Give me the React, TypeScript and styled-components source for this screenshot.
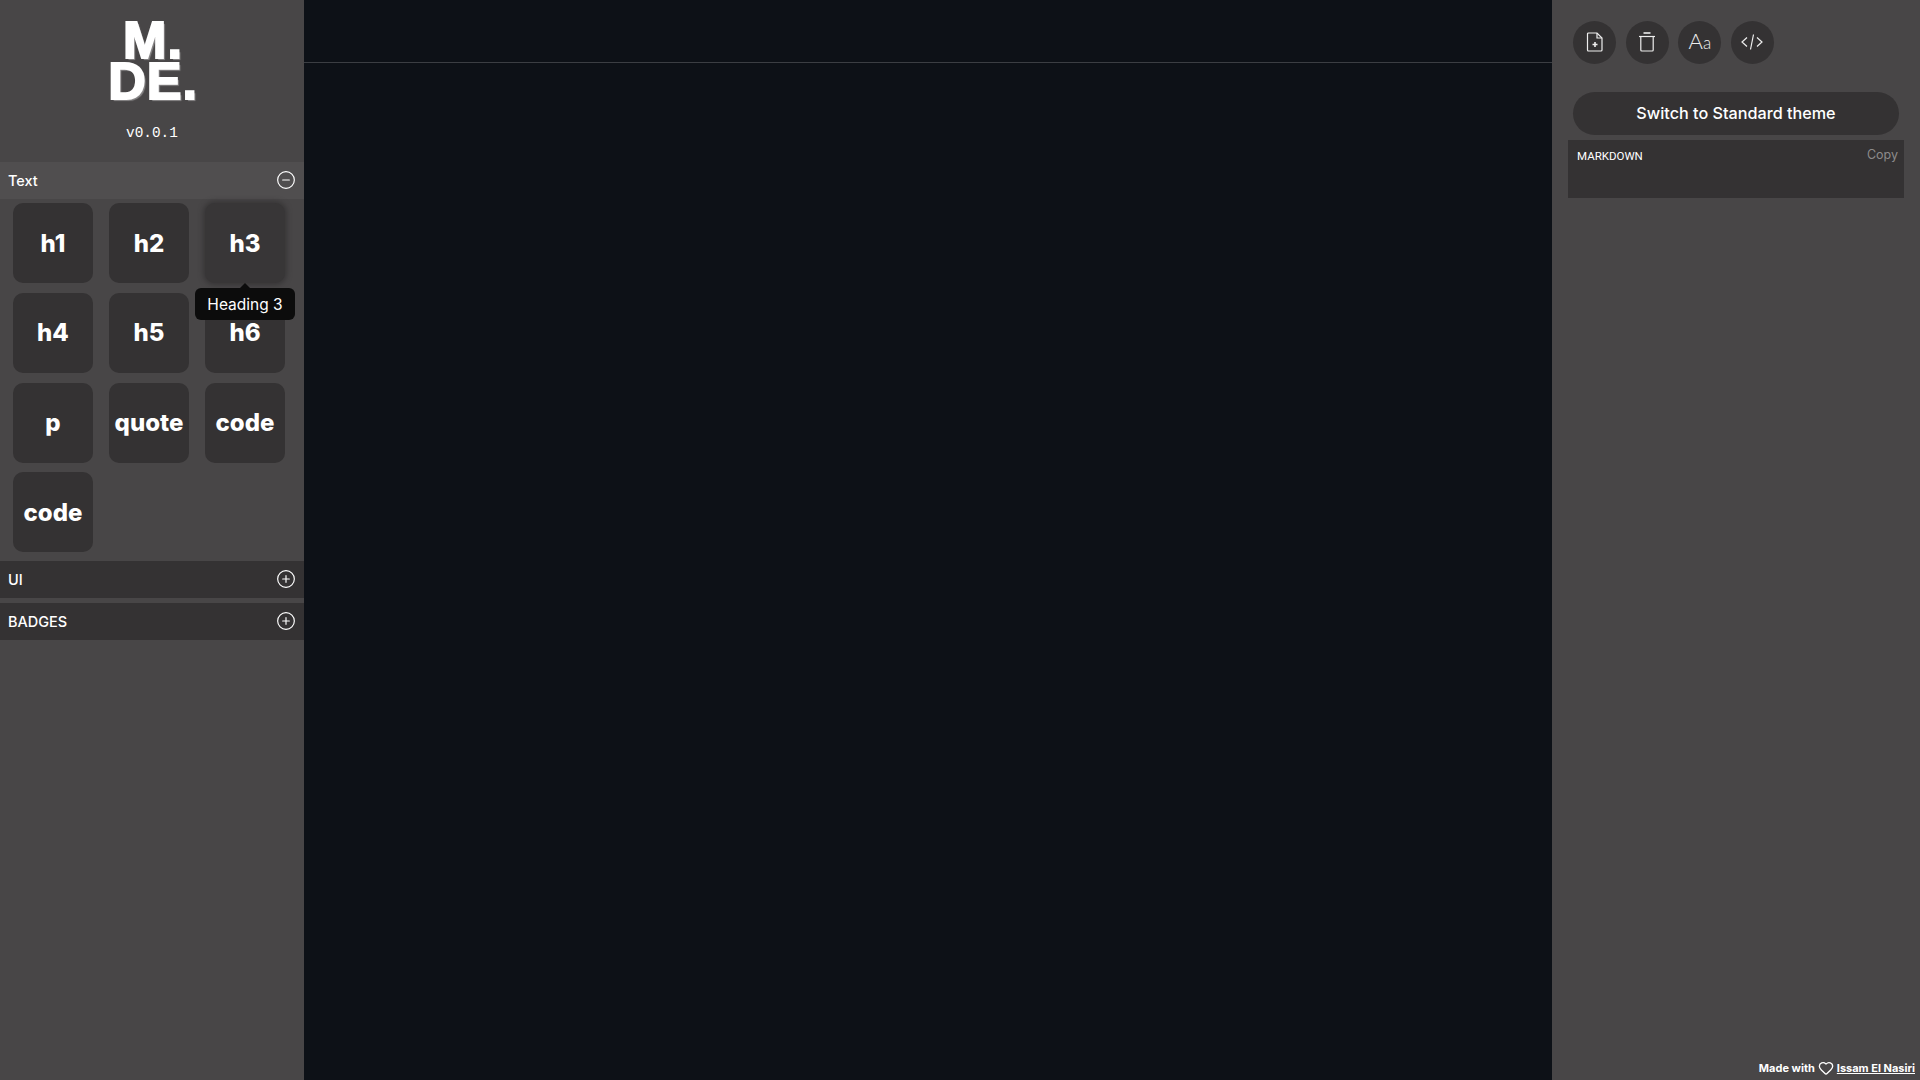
import styled, { createGlobalStyle } from "styled-components";
import { CirclePlus, CircleMinus, Heart } from "lucide-react";

const GlobalStyle = createGlobalStyle`
  html, body {
    margin: 0;
    padding: 0;
    height: 100%;
    background: #0d1117;
    overflow: hidden;
  }
  * {
    box-sizing: border-box;
  }
`;

const Page = styled.div`
  display: grid;
  grid-template-columns: 304px 1fr 368px;
  height: 100vh;
  font-family: "Inter", "Liberation Sans", sans-serif;
  color: #fff;
`;

const Sidebar = styled.aside`
  background: #484647;
  display: flex;
  flex-direction: column;
`;

const LogoBox = styled.div`
  height: 162px;
  display: flex;
  flex-direction: column;
  align-items: center;
  padding-top: 20px;
`;

const LogoLine = styled.div`
  font-family: "Liberation Sans", sans-serif;
  font-weight: 700;
  font-size: 52px;
  line-height: 41px;
  height: 41px;
  letter-spacing: 1px;
  text-align: center;
  text-shadow: 2px 2px 1px #8a8889;
  margin-left: 2px;
  -webkit-text-stroke: 2px #fff;
`;

const Version = styled.div`
  font-family: "Liberation Mono", monospace;
  font-size: 14.4px;
  line-height: 16px;
  margin-top: 23px;
`;

const SectionHeader = styled.div<{ $open?: boolean }>`
  height: 37px;
  display: flex;
  align-items: center;
  justify-content: space-between;
  padding: ${(p) => (p.$open ? "0 8px 1px" : "0 8px")};
  background: ${(p) => (p.$open ? "#504e4f" : "#343233")};
  font-size: 14.5px;
  font-weight: 500;
  margin-bottom: ${(p) => (p.$open ? "0" : "5px")};
`;

const TileGrid = styled.div`
  display: grid;
  grid-template-columns: repeat(3, 80px);
  column-gap: 16px;
  row-gap: 9.8px;
  padding: 4px 0 8.6px 13px;
`;

const Tile = styled.button<{ $hover?: boolean }>`
  position: relative;
  width: 80px;
  height: 80px;
  border: none;
  padding: 0;
  border-radius: 10px;
  background: ${(p) => (p.$hover ? "#383637" : "#343233")};
  box-shadow: ${(p) => (p.$hover ? "0 0 5px 2px #383637" : "none")};
  color: #fff;
  font-family: "Inter", sans-serif;
  font-size: 24px;
  font-weight: 800;
  white-space: nowrap;
`;

const Tooltip = styled.div`
  position: absolute;
  z-index: 2;
  top: 85px;
  left: -10px;
  width: 100px;
  height: 32px;
  border-radius: 6px;
  background: #0c0c0c;
  font-size: 15.5px;
  font-weight: 400;
  line-height: 34px;
  text-align: center;
  &::before {
    content: "";
    position: absolute;
    top: -5px;
    left: 45px;
    border-left: 5px solid transparent;
    border-right: 5px solid transparent;
    border-bottom: 5px solid #0c0c0c;
  }
`;

const Editor = styled.main`
  background: #0d1117;
`;

const EditorTop = styled.div`
  height: 63px;
  border-bottom: 1px solid #3b3e43;
`;

const RightPanel = styled.aside`
  background: #484647;
  display: flex;
  flex-direction: column;
  padding: 21px 0 0;
`;

const ToolRow = styled.div`
  display: flex;
  gap: 9.67px;
  padding-left: 21px;
`;

const RoundButton = styled.button`
  width: 43px;
  height: 43px;
  border: none;
  padding: 0 0 2px;
  border-radius: 50%;
  background: #343233;
  color: #eeeeee;
  display: flex;
  align-items: center;
  justify-content: center;
`;

const AaLabel = styled.span`
  font-family: "Lato", sans-serif;
  font-weight: 300;
  font-size: 22px;
  line-height: 1;
  margin-bottom: 2px;
  small {
    font-size: 17px;
  }
`;

const ThemeButton = styled.button`
  width: 326px;
  height: 43px;
  margin: 28px 0 5px 21px;
  padding: 0 0 2px;
  border: none;
  border-radius: 22px;
  background: #343233;
  color: #fff;
  font-family: "Inter", sans-serif;
  font-size: 16.2px;
  font-weight: 500;
`;

const MarkdownBox = styled.div`
  width: 336px;
  height: 58px;
  margin-left: 16px;
  padding: 8px 6px 0 9px;
  background: #343233;
  display: flex;
  justify-content: space-between;
  align-items: flex-start;
`;

const MarkdownLabel = styled.span`
  font-family: "Roboto", sans-serif;
  font-size: 11.5px;
  line-height: 16px;
`;

const CopyLabel = styled.span`
  font-size: 12.5px;
  line-height: 14px;
  color: #8c8b8b;
`;

const Footer = styled.div`
  margin-top: auto;
  height: 24px;
  padding: 0 5px 0 0;
  display: flex;
  align-items: center;
  justify-content: flex-end;
  gap: 3px;
  font-size: 11px;
  font-weight: 700;
`;

const AuthorLink = styled.a`
  color: #fff;
  text-decoration: underline;
`;

const FileIcon = () => (
  <svg width="18" height="20" viewBox="0 0 18 20" fill="none" stroke="currentColor" strokeWidth="1.2">
    <path d="M2.5 1h8.5l5 5v12a1 1 0 0 1-1 1H2.5a1 1 0 0 1-1-1V2a1 1 0 0 1 1-1z" />
    <path d="M11 1v5h5" />
    <path d="M9 10v5M6.5 12.5h5" strokeWidth="1.6" />
  </svg>
);

const TrashIcon = () => (
  <svg width="18" height="20" viewBox="0 0 18 20" fill="none" stroke="currentColor" strokeWidth="1.2">
    <path d="M5.5 1h7" strokeWidth="1.6" />
    <path d="M1 4.5h16" />
    <path d="M2.8 4.5V18a1 1 0 0 0 1 1h10.4a1 1 0 0 0 1-1V4.5" />
  </svg>
);

const CodeIcon = () => (
  <svg width="22" height="18" viewBox="0 0 22 18" fill="none" stroke="currentColor" strokeWidth="1.2">
    <path d="M6 4.5L1 9l5 4.5" />
    <path d="M16 4.5L21 9l-5 4.5" />
    <path d="M12.5 1.5L9.5 16.5" />
  </svg>
);

const textTiles = ["h1", "h2", "h3", "h4", "h5", "h6", "p", "quote", "code", "code"];

const App = () => {
  return (
    <Page>
      <GlobalStyle />
      <Sidebar>
        <LogoBox>
          <LogoLine>M.</LogoLine>
          <LogoLine>DE.</LogoLine>
          <Version>v0.0.1</Version>
        </LogoBox>
        <SectionHeader $open>
          Text
          <CircleMinus size={20} strokeWidth={1.4} />
        </SectionHeader>
        <TileGrid>
          {textTiles.map((tile, i) => (
            <Tile key={i} $hover={tile === "h3"}>
              {tile}
              {tile === "h3" && <Tooltip>Heading 3</Tooltip>}
            </Tile>
          ))}
        </TileGrid>
        <SectionHeader>
          UI
          <CirclePlus size={20} strokeWidth={1.4} />
        </SectionHeader>
        <SectionHeader>
          BADGES
          <CirclePlus size={20} strokeWidth={1.4} />
        </SectionHeader>
      </Sidebar>
      <Editor>
        <EditorTop />
      </Editor>
      <RightPanel>
        <ToolRow>
          <RoundButton>
            <FileIcon />
          </RoundButton>
          <RoundButton>
            <TrashIcon />
          </RoundButton>
          <RoundButton>
            <AaLabel>
              A<small>a</small>
            </AaLabel>
          </RoundButton>
          <RoundButton>
            <CodeIcon />
          </RoundButton>
        </ToolRow>
        <ThemeButton>Switch to Standard theme</ThemeButton>
        <MarkdownBox>
          <MarkdownLabel>MARKDOWN</MarkdownLabel>
          <CopyLabel>Copy</CopyLabel>
        </MarkdownBox>
        <Footer>
          Made with <Heart size={16} strokeWidth={2} />
          <AuthorLink href="#">Issam El Nasiri</AuthorLink>
        </Footer>
      </RightPanel>
    </Page>
  );
};

export default App;
